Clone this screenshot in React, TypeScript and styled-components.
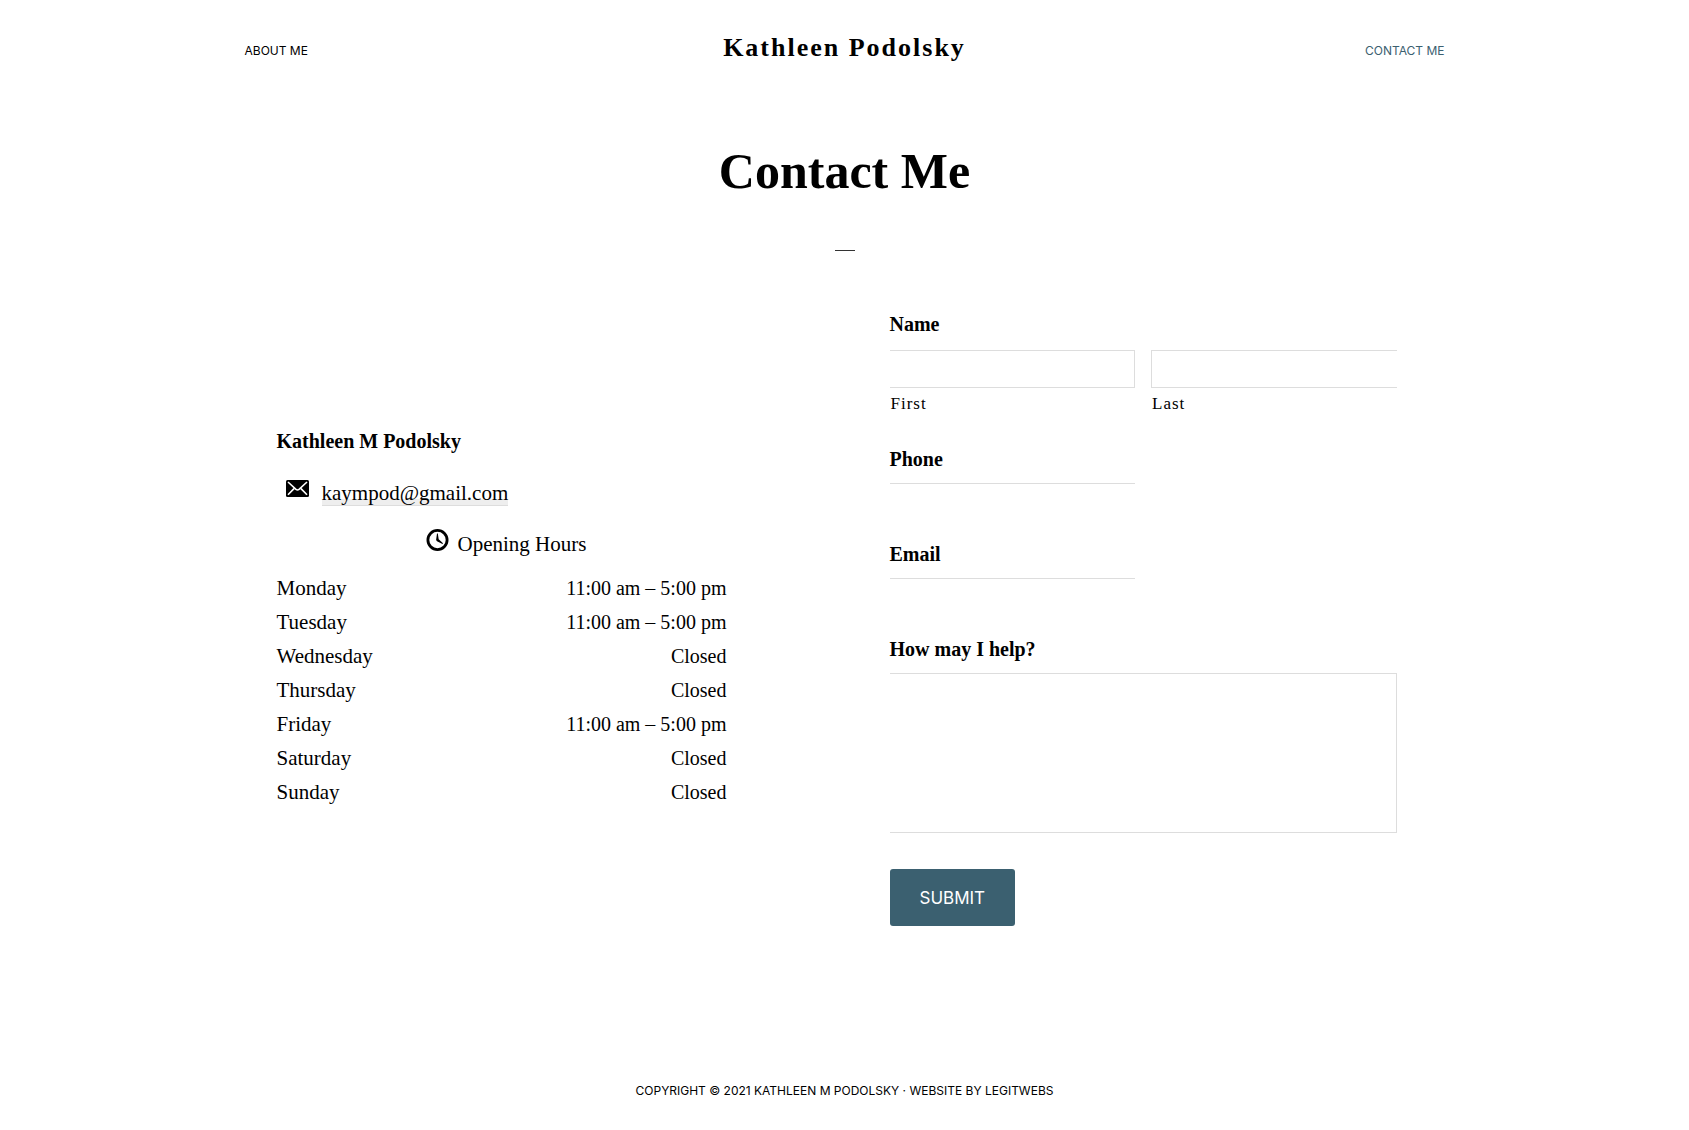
import React from 'react';
import styled, { createGlobalStyle } from 'styled-components';

const serif = '"Liberation Serif", "Times New Roman", serif';
const sans = 'Inter, "Open Sans", sans-serif';
const line = '#dddddd';

const GlobalStyle = createGlobalStyle`
  *, *::before, *::after { box-sizing: border-box; }
  body {
    margin: 0;
    background: #fff;
    color: #000;
    font-family: ${serif};
    font-size: 21px;
    line-height: 34px;
  }
`;

const Wrap = styled.div`
  max-width: 1200px;
  margin: 0 auto;
`;

const Header = styled.header`
  display: grid;
  grid-template-columns: 1fr auto 1fr;
  align-items: end;
  padding: 32px 0;
`;

const NavLink = styled.a<{ $current?: boolean; $end?: boolean }>`
  justify-self: ${(p) => (p.$end ? 'end' : 'start')};
  color: ${(p) => (p.$current ? '#3b6070' : '#000')};
  font-family: ${sans};
  font-size: 12px;
  line-height: 26px;
  text-transform: uppercase;
  text-decoration: none;
`;

const SiteTitle = styled.a`
  color: #000;
  font-size: 26px;
  font-weight: 700;
  line-height: 32px;
  letter-spacing: 2px;
  text-decoration: none;
`;

const PageTitle = styled.h1`
  margin: 43px 0 47px;
  font-size: 50px;
  font-weight: 700;
  line-height: 64px;
  text-align: center;
`;

const Rule = styled.hr`
  width: 20px;
  height: 1px;
  margin: 0 auto 56px;
  border: 0;
  background: #333;
`;

const Columns = styled.div`
  display: grid;
  grid-template-columns: minmax(0, 450px) minmax(0, 507px);
  justify-content: space-between;
  align-items: center;
  padding: 0 48px 0 32px;
`;

const Owner = styled.p`
  margin: 0 0 18px;
  font-size: 20px;
  font-weight: 700;
`;

const IconLine = styled.div<{ $center?: boolean }>`
  display: flex;
  justify-content: ${(p) => (p.$center ? 'center' : 'flex-start')};
  align-items: flex-start;
  gap: ${(p) => (p.$center ? 9 : 13)}px;
  min-height: 34px;
  margin-bottom: ${(p) => (p.$center ? 10 : 17)}px;
`;

const Icon = styled.svg`
  flex: none;
  width: 24px;
  height: 24px;
  margin-left: 8px;
`;

const MailLink = styled.a`
  height: 30px;
  border-bottom: 1px solid ${line};
  background: linear-gradient(#fff 23px, #eee 23px);
  color: #000;
  text-decoration: none;
`;

const HoursTable = styled.table`
  width: 100%;
  border-collapse: collapse;
`;

const Day = styled.th`
  padding: 0;
  font-weight: 400;
  text-align: left;
`;

const Time = styled.td`
  padding: 0;
  font-size: 20px;
  text-align: right;
`;

const Form = styled.form`
  display: flex;
  flex-direction: column;
  gap: 16px;
`;

const NameSet = styled.fieldset`
  min-width: 0;
  margin: 0 0 10px;
  padding: 0;
  border: 0;
`;

const Legend = styled.legend`
  padding: 0 0 9px;
  font-size: 20px;
  font-weight: 700;
`;

const NameGrid = styled.div`
  display: grid;
  grid-template-columns: 1fr 1fr;
  gap: 16px;
`;

const NamePart = styled.div`
  display: flex;
  flex-direction: column;
  gap: 4px;
`;

const SubLabel = styled.label`
  padding-left: 1px;
  font-size: 17px;
  line-height: 24px;
  letter-spacing: 1px;
`;

const Field = styled.div`
  display: flex;
  flex-direction: column;
  gap: 7px;
`;

const Label = styled.label`
  font-size: 20px;
  font-weight: 700;
`;

const Input = styled.input<{ $open: 'left' | 'right' | 'all' }>`
  width: ${(p) => (p.$open === 'all' ? 'calc(50% - 8px)' : '100%')};
  height: 38px;
  padding: 0 12px;
  border: 0 solid ${line};
  border-top-width: 1px;
  border-bottom-width: ${(p) => (p.$open === 'all' ? 0 : 1)}px;
  border-left-width: ${(p) => (p.$open === 'right' ? 1 : 0)}px;
  border-right-width: ${(p) => (p.$open === 'left' ? 1 : 0)}px;
  border-radius: 0;
  background: transparent;
  font: 18px ${serif};
`;

const Message = styled.textarea`
  display: block;
  width: 100%;
  height: 160px;
  padding: 12px;
  border: 1px solid ${line};
  border-left: 0;
  border-radius: 0;
  background: transparent;
  font: 18px ${serif};
  resize: none;
`;

const Submit = styled.button`
  align-self: flex-start;
  margin-top: 20px;
  padding: 17px 30px 15px;
  border: 0;
  border-radius: 3px;
  background: #3b6070;
  color: #fff;
  font-family: ${sans};
  font-size: 17px;
  line-height: 25px;
  text-transform: uppercase;
  cursor: pointer;
`;

const Footer = styled.footer`
  margin-top: 153px;
  padding-bottom: 27px;
  font-family: ${sans};
  font-size: 12px;
  line-height: 24px;
  text-align: center;
  text-transform: uppercase;

  a {
    color: inherit;
    text-decoration: none;
  }
`;

const hours = [
  ['Monday', '11:00 am – 5:00 pm'],
  ['Tuesday', '11:00 am – 5:00 pm'],
  ['Wednesday', 'Closed'],
  ['Thursday', 'Closed'],
  ['Friday', '11:00 am – 5:00 pm'],
  ['Saturday', 'Closed'],
  ['Sunday', 'Closed'],
];

function MailIcon() {
  return (
    <Icon viewBox="0 0 24 24" aria-hidden="true">
      <rect x="1" y="4" width="23" height="17" rx="1.5" fill="#000" />
      <path
        d="M3 6 11 13.4Q12.5 14.6 14 13.4L22 6M3 18.8 9 12.6M22 18.8 16 12.6"
        fill="none"
        stroke="#fff"
        strokeWidth="1.6"
      />
    </Icon>
  );
}

function ClockIcon() {
  return (
    <Icon viewBox="0 0 24 24" aria-hidden="true">
      <circle cx="12.5" cy="13" r="9.6" fill="none" stroke="#000" strokeWidth="2.8" />
      <path d="M12 6.5h.8l.9 5.7 4.3 4.1-.5.6-5.5-2.6-.9-1.3z" fill="#000" />
    </Icon>
  );
}

export default function App() {
  return (
    <>
      <GlobalStyle />
      <Wrap>
        <Header>
          <NavLink href="#about">About Me</NavLink>
          <SiteTitle href="#home">Kathleen Podolsky</SiteTitle>
          <NavLink href="#contact" aria-current="page" $current $end>
            Contact Me
          </NavLink>
        </Header>
        <main>
          <PageTitle>Contact Me</PageTitle>
          <Rule />
          <Columns>
            <section>
              <Owner>Kathleen M Podolsky</Owner>
              <IconLine>
                <MailIcon />
                <MailLink href="mailto:kaympod@gmail.com">kaympod@gmail.com</MailLink>
              </IconLine>
              <IconLine $center>
                <ClockIcon />
                <span>Opening Hours</span>
              </IconLine>
              <HoursTable>
                <tbody>
                  {hours.map(([day, time]) => (
                    <tr key={day}>
                      <Day scope="row">{day}</Day>
                      <Time>{time}</Time>
                    </tr>
                  ))}
                </tbody>
              </HoursTable>
            </section>
            <Form onSubmit={(e) => e.preventDefault()}>
              <NameSet>
                <Legend>Name</Legend>
                <NameGrid>
                  <NamePart>
                    <Input id="first" type="text" $open="left" />
                    <SubLabel htmlFor="first">First</SubLabel>
                  </NamePart>
                  <NamePart>
                    <Input id="last" type="text" $open="right" />
                    <SubLabel htmlFor="last">Last</SubLabel>
                  </NamePart>
                </NameGrid>
              </NameSet>
              <Field>
                <Label htmlFor="phone">Phone</Label>
                <Input id="phone" type="tel" $open="all" />
              </Field>
              <Field>
                <Label htmlFor="email">Email</Label>
                <Input id="email" type="email" $open="all" />
              </Field>
              <Field>
                <Label htmlFor="help">How may I help?</Label>
                <Message id="help" />
              </Field>
              <Submit type="submit">Submit</Submit>
            </Form>
          </Columns>
        </main>
        <Footer>
          Copyright © 2021 Kathleen M Podolsky · Website by <a href="#legitwebs">LegitWebs</a>
        </Footer>
      </Wrap>
    </>
  );
}
